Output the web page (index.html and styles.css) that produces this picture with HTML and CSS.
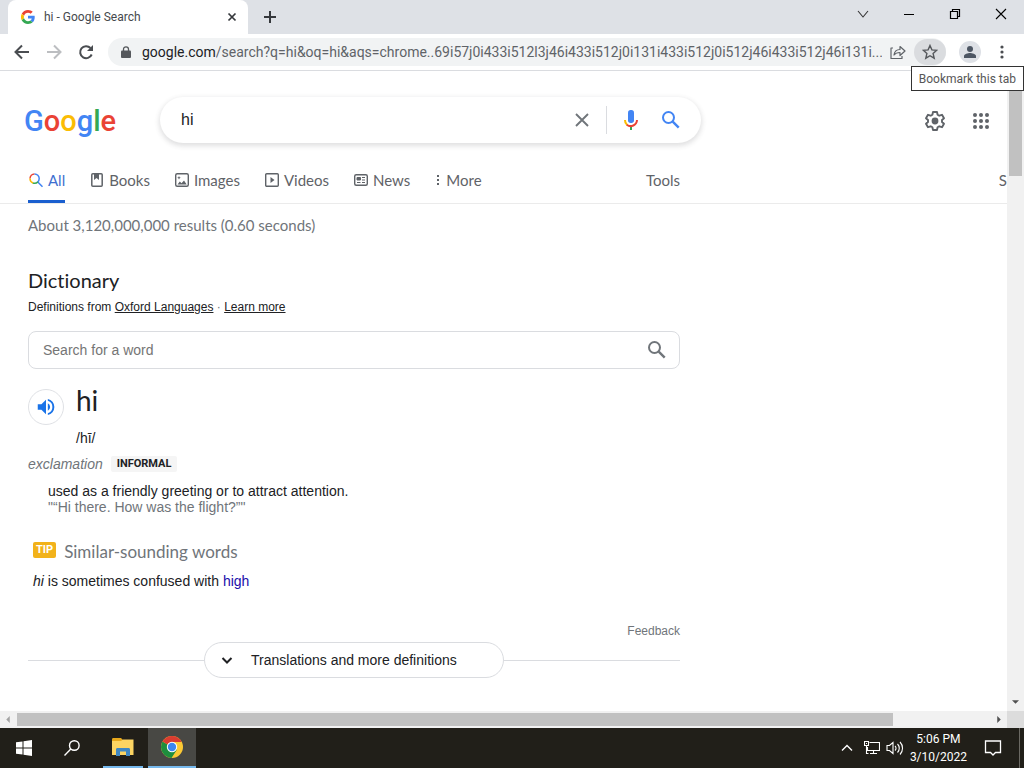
FILE: index.html
```
<!DOCTYPE html>
<html lang="en">
<head>
<meta charset="utf-8">
<meta name="viewport" content="width=device-width, initial-scale=1">
<title>hi - Google Search</title>
<link rel="stylesheet" href="styles.css">
</head>
<body>
<div class="desktop">
  <header class="browser">
    <div class="tabstrip">
      <div class="tab">
        <svg class="favicon" viewBox="0 0 48 48" width="14" height="14" aria-hidden="true"><path fill="#ea4335" d="M24 9.5c3.5 0 6.700 1.200 9.200 3.600l6.900-6.900C35.900 2.400 30.500 0 24 0 14.600 0 6.500 5.400 2.600 13.200l8 6.200C12.400 13.700 17.700 9.500 24 9.500z"/><path fill="#4285f4" d="M47 24.500c0-1.600-.2-3.100-.4-4.500H24v9h12.900c-.6 3-2.200 5.500-4.700 7.200l7.700 6C44.400 38 47 31.800 47 24.500z"/><path fill="#fbbc05" d="M10.500 28.600a14.500 14.500 0 0 1 0-9.200l-8-6.200a24 24 0 0 0 0 21.600z"/><path fill="#34a853" d="M24 48c6.500 0 11.900-2.100 15.900-5.800l-7.700-6c-2.200 1.500-4.900 2.300-8.200 2.300-6.300 0-11.600-4.200-13.500-9.900l-8 6.200C6.500 42.600 14.600 48 24 48z"/></svg>
        <span class="tab-title">hi - Google Search</span>
        <button class="tab-close" aria-label="Close tab"><svg viewBox="0 0 10 10" width="10" height="10"><path d="M1.500 1.500l7 7M8.500 1.500l-7 7" stroke="#35383c" stroke-width="1.700"/></svg></button>
      </div>
      <button class="new-tab" aria-label="New tab"><svg viewBox="0 0 12 12" width="12" height="12"><path d="M6 0v12M0 6h12" stroke="#35383c" stroke-width="2"/></svg></button>
      <div class="window-controls">
        <button aria-label="Search tabs"><svg viewBox="0 0 12 12" width="12" height="12"><path d="M1 3l5 6 5-6" fill="none" stroke="#333" stroke-width="1.100"/></svg></button>
        <button aria-label="Minimize"><svg viewBox="0 0 12 12" width="12" height="12"><path d="M1 6.500h10" stroke="#000"/></svg></button>
        <button aria-label="Restore"><svg viewBox="0 0 12 12" width="12" height="12"><path d="M1.500 3.500h7v7h-7zM3.500 3.500v-2h7v7h-2" fill="none" stroke="#000" stroke-width="1.200"/></svg></button>
        <button aria-label="Close"><svg viewBox="0 0 12 12" width="12" height="12"><path d="M1 1l10 10M11 1L1 11" stroke="#000" stroke-width="1.100"/></svg></button>
      </div>
    </div>
    <div class="toolbar">
      <button class="tool" aria-label="Back"><svg viewBox="0 0 16 16" width="16" height="16"><path d="M15 8H2M8 1.500L1.500 8 8 14.500" fill="none" stroke="#4a4d51" stroke-width="2"/></svg></button>
      <button class="tool" aria-label="Forward"><svg viewBox="0 0 16 16" width="16" height="16"><path d="M1 8h13M8 1.500L14.500 8 8 14.500" fill="none" stroke="#bcbec1" stroke-width="2"/></svg></button>
      <button class="tool" aria-label="Reload"><svg viewBox="0 0 16 16" width="16" height="16"><path d="M13.700 10.500A6 6 0 1 1 12.500 4" fill="none" stroke="#4a4d51" stroke-width="2"/><path d="M15 1v6H9z" fill="#4a4d51"/></svg></button>
      <div class="omnibox">
        <svg class="lock" viewBox="0 0 10 12" width="10" height="12" aria-hidden="true"><rect x="0" y="4.500" width="10" height="7.500" rx="1" fill="#55585c"/><path d="M2.500 5V3.300a2.500 2.500 0 0 1 5 0V5" fill="none" stroke="#55585c" stroke-width="1.300"/></svg>
        <label class="host" for="url">google.com</label>
        <input class="url" id="url" type="text" value="/search?q=hi&amp;oq=hi&amp;aqs=chrome..69i57j0i433i512l3j46i433i512j0i131i433i512j0i512j46i433i512j46i131i...">
        <button class="share" aria-label="Share this page"><svg viewBox="0 0 16 16" width="16" height="16"><path d="M3 4H1v10.500h11V12M4 11c.5-4 3-5.500 6-5.500V2.500l5 4.500-5 4.500V8.500C7.500 8.500 5.500 9 4 11z" fill="none" stroke="#5f6368" stroke-width="1.200" stroke-linejoin="round"/></svg></button>
        <div class="bookmark-wrap">
          <button class="bookmark" aria-label="Bookmark" aria-describedby="tip"><svg viewBox="0 0 16 16" width="16" height="16"><path d="M8 1.500l1.900 4.400 4.800.4-3.600 3.200 1.100 4.700L8 11.700l-4.200 2.500 1.100-4.700L1.300 6.300l4.800-.4z" fill="none" stroke="#55585c" stroke-width="1.400"/></svg></button>
          <div class="tooltip" id="tip" role="tooltip">Bookmark this tab</div>
        </div>
      </div>
      <button class="profile" aria-label="Profile"><svg viewBox="0 0 14 14" width="14" height="14"><circle cx="7" cy="4" r="3" fill="#4d5663"/><path d="M1 13v-2c0-2 4-3 6-3s6 1 6 3v2z" fill="#4d5663"/></svg></button>
      <button class="menu" aria-label="Chrome menu"><svg viewBox="0 0 4 14" width="4" height="14" fill="#4a4d51"><circle cx="2" cy="2" r="1.600"/><circle cx="2" cy="7" r="1.600"/><circle cx="2" cy="12" r="1.600"/></svg></button>
    </div>
  </header>

  <div class="viewport">
    <div class="page">
      <div class="search-header">
        <a class="logo" href="#" aria-label="Google"><span class="blue">G</span><span class="red">o</span><span class="yellow">o</span><span class="blue">g</span><span class="green">l</span><span class="red">e</span></a>
        <form class="search-box">
          <input class="query" type="text" value="hi" aria-label="Search">
          <button type="button" class="clear" aria-label="Clear"><svg viewBox="0 0 14 14" width="14" height="14"><path d="M1 1l12 12M13 1L1 13" stroke="#70757a" stroke-width="1.900"/></svg></button>
          <button type="button" class="mic" aria-label="Search by voice"><svg viewBox="0 0 24 24" width="24" height="24"><rect x="9" y="2" width="6" height="13" rx="2.700" fill="#4285f4"/><path d="M11 18h2v4h-2z" fill="#34a853"/><path d="M6 12a6 6 0 0 0 2.200 5" fill="none" stroke="#fbbc05" stroke-width="2"/><path d="M7.800 16.700A6.300 6.300 0 0 0 18 12" fill="none" stroke="#ea4335" stroke-width="2"/></svg></button>
          <button type="button" class="go" aria-label="Google Search"><svg viewBox="0 0 24 24" width="24" height="24"><circle cx="9.500" cy="9.500" r="5.500" fill="none" stroke="#4285f4" stroke-width="2"/><path d="M13.700 13.700l6 6" stroke="#4285f4" stroke-width="2.400"/></svg></button>
        </form>
        <div class="header-actions">
          <button aria-label="Settings"><svg viewBox="0 0 24 24" width="24" height="24"><path d="M10 3h4l.6 2.700 1.700 1 2.700-.9 2 3.500L19 11v2l2 1.700-2 3.500-2.700-.9-1.700 1L14 21h-4l-.6-2.700-1.700-1-2.700.9-2-3.500L5 13v-2L3 9.300l2-3.500 2.700.9 1.700-1z" fill="none" stroke="#5f6368" stroke-width="1.900" stroke-linejoin="round"/><circle cx="12" cy="12" r="3.400" fill="#5f6368"/></svg></button>
          <button aria-label="Google apps"><svg viewBox="0 0 24 24" width="24" height="24" fill="#5f6368"><circle cx="6" cy="6" r="2"/><circle cx="12" cy="6" r="2"/><circle cx="18" cy="6" r="2"/><circle cx="6" cy="12" r="2"/><circle cx="12" cy="12" r="2"/><circle cx="18" cy="12" r="2"/><circle cx="6" cy="18" r="2"/><circle cx="12" cy="18" r="2"/><circle cx="18" cy="18" r="2"/></svg></button>
        </div>
      </div>

      <nav class="filters">
        <div class="filter-list">
          <a class="active" href="#"><svg viewBox="0 0 16 16" width="16" height="16" fill="none" stroke-width="1.500"><path d="M2 6.500A4.700 4.700 0 0 1 6.500 2" stroke="#ea4335"/><path d="M6.500 2a4.600 4.600 0 0 1 4.700 4.600A4.600 4.600 0 0 1 9.800 10l4.700 4.700" stroke="#4285f4"/><path d="M9.900 9.900a4.700 4.700 0 0 1-5.200 1" stroke="#34a853"/><path d="M5 11a4.700 4.700 0 0 1-3-4.500" stroke="#fbbc05"/></svg>All</a>
          <a href="#"><svg viewBox="0 0 16 16" width="16" height="16"><rect x="2.800" y="1.800" width="10.400" height="12.400" rx="1" fill="none" stroke="#5f6368" stroke-width="1.500"/><path d="M5 2h5v6L7.500 6 5 8z" fill="#5f6368"/></svg>Books</a>
          <a href="#"><svg viewBox="0 0 16 16" width="16" height="16"><rect x="1.700" y="1.700" width="12.600" height="12.600" rx="1.500" fill="none" stroke="#5f6368" stroke-width="1.400"/><path d="M3.500 12.500l2.300-3 1.700 1.700L10 8.500l2.700 4zM5 4l.6 1.200 1.200.5-1.200.5L5 7.500l-.6-1.300-1.200-.5 1.200-.5z" fill="#5f6368"/></svg>Images</a>
          <a href="#"><svg viewBox="0 0 16 16" width="16" height="16"><rect x="1.700" y="1.700" width="12.600" height="12.600" rx="1" fill="none" stroke="#5f6368" stroke-width="1.400"/><path d="M6.500 5v6l4-3z" fill="#5f6368"/></svg>Videos</a>
          <a href="#"><svg viewBox="0 0 16 16" width="16" height="16"><rect x="1.700" y="2.700" width="12.600" height="10.600" rx="1.500" fill="none" stroke="#5f6368" stroke-width="1.400"/><path d="M4 5.500h3.500V8H4zM9 5.500h3M9 8h3M4 10.500h3.500M9 10.500h3" fill="#5f6368" stroke="#5f6368"/></svg>News</a>
          <button class="more"><svg viewBox="0 0 8 12" width="8" height="12" fill="#5f6368"><rect x="3" y="1" width="2" height="2"/><rect x="3" y="5" width="2" height="2"/><rect x="3" y="9" width="2" height="2"/></svg>More</button>
        </div>
        <button class="tools">Tools</button>
        <a class="safe" href="#">S</a>
      </nav>

      <main class="results">
        <p class="stats">About 3,120,000,000 results (0.60 seconds)</p>
        <h2 class="heading">Dictionary</h2>
        <p class="source">Definitions from <a href="#">Oxford Languages</a> <span class="dot">·</span> <a href="#">Learn more</a></p>
        <form class="word-search">
          <input type="text" placeholder="Search for a word" aria-label="Search for a word">
          <button type="button" aria-label="Look up"><svg viewBox="0 0 24 24" width="24" height="24"><circle cx="9.500" cy="9.500" r="5.500" fill="none" stroke="#70757a" stroke-width="2"/><path d="M13.700 13.700l6 6" stroke="#70757a" stroke-width="2.400"/></svg></button>
        </form>
        <div class="entry">
          <button class="listen" aria-label="Listen"><svg viewBox="0 0 24 24" width="22" height="22" fill="#1a73e8"><path d="M3 9v6h4l5 5V4L7 9zM16.500 12A4.500 4.500 0 0 0 14 8v8a4.500 4.500 0 0 0 2.500-4zM14 3.200v2.100a7 7 0 0 1 0 13.400v2.100a9 9 0 0 0 0-17.600z"/></svg></button>
          <div>
            <h3 class="word">hi</h3>
            <p class="phonetic">/hī/</p>
          </div>
        </div>
        <p class="grammar"><em>exclamation</em><span class="register">INFORMAL</span></p>
        <div class="sense">
          <p>used as a friendly greeting or to attract attention.</p>
          <p class="example">"“Hi there. How was the flight?”"</p>
        </div>
        <section class="tip">
          <div class="tip-head"><span class="badge">TIP</span><h4>Similar-sounding words</h4></div>
          <p><em>hi</em> is sometimes confused with <a href="#">high</a></p>
        </section>
        <a class="feedback" href="#">Feedback</a>
        <div class="expand">
          <button><svg viewBox="0 0 12 12" width="12" height="12"><path d="M1.500 4L6 8.500 10.500 4" fill="none" stroke="#202124" stroke-width="2"/></svg><span>Translations and more definitions</span></button>
        </div>
      </main>
    </div>
    <div class="scroll-y"><span class="thumb-y"></span><svg viewBox="0 0 8 4" width="7" height="4"><path d="M0 0h8L4 4z" fill="#505050"/></svg></div>
    <div class="scroll-x"><svg viewBox="0 0 4 8" width="4" height="7"><path d="M4 0v8L0 4z" fill="#a3a3a3"/></svg><span class="track-x"><span class="thumb-x"></span></span><svg viewBox="0 0 4 8" width="4" height="7"><path d="M0 0v8l4-4z" fill="#505050"/></svg></div>
    <div class="corner"></div>
  </div>

  <footer class="taskbar">
    <button class="task" aria-label="Start"><svg viewBox="0 0 16 16" width="16" height="16" fill="#fff"><path d="M0 2.300L6.500 1.400v6.100H0zM7.500 1.200L16 0v7.500H7.500zM0 8.500h6.500v6.100L0 13.700zM7.500 8.500H16V16l-8.500-1.200z"/></svg></button>
    <button class="task" aria-label="Search"><svg viewBox="0 0 16 16" width="16" height="16" fill="none" stroke="#fff" stroke-width="1.400"><circle cx="10.300" cy="5.500" r="4.800"/><path d="M6.800 9L.5 15.500"/></svg></button>
    <button class="task running" aria-label="File Explorer"><svg viewBox="0 0 22 18" width="22" height="18"><path d="M0 1.500C0 .7.500 0 1.300 0H9l2 2v14H0z" fill="#e8a91c"/><path d="M0 3h9l2-1.500h10.500V17H0z" fill="#fcd462"/><path d="M4 18v-6.500c0-.8.500-1.500 1.500-1.500h11c1 0 1.500.7 1.500 1.500V18h-4v-4.500H8V18z" fill="#3f87c2"/></svg></button>
    <button class="task current" aria-label="Google Chrome"><svg viewBox="0 0 24 24" width="24" height="24"><circle cx="12" cy="12" r="11" fill="#fcc934"/><path d="M12 12L2.500 6.500A11 11 0 0 0 11.500 23L17 14.500z" fill="#1e8e3e"/><path d="M12 12L2.500 6.500a11 11 0 0 1 19 0z" fill="#d93c31"/><path d="M12 7h9.800L17 14.500z" fill="#fcc934"/><circle cx="12" cy="12" r="5.200" fill="#fff"/><circle cx="12" cy="12" r="4.200" fill="#3c86f0"/></svg></button>
    <div class="tray">
      <button class="hidden-icons" aria-label="Show hidden icons"><svg viewBox="0 0 12 12" width="12" height="12"><path d="M1 8.500l5-5 5 5" fill="none" stroke="#fff" stroke-width="1.400"/></svg></button>
      <button aria-label="Network"><svg viewBox="0 0 16 16" width="16" height="16" fill="none" stroke="#fff" stroke-width="1.100"><path d="M5.500 2.500h10v8h-12V7M9.500 10.500v3M6 13.500h7M.5 1.500h4v4h-4zM2.500 5.500v8h2M2 3.500h1"/></svg></button>
      <button aria-label="Volume"><svg viewBox="0 0 18 16" width="18" height="16" fill="none" stroke="#fff" stroke-width="1.100"><path d="M1 5.500h2.500L7 2.500v11l-3.500-3H1zM9 6a3 3 0 0 1 0 4.500M11.500 4a6 6 0 0 1 0 8.500M14 2a9 9 0 0 1 0 12.500"/></svg></button>
      <div class="clock"><time>5:06 PM</time><time datetime="2022-03-10">3/10/2022</time></div>
      <button class="notify" aria-label="Notifications"><svg viewBox="0 0 18 18" width="18" height="18"><path d="M1.500 2h15v11.500h-5L9 16l-2.500-2.500h-5z" fill="none" stroke="#fff" stroke-width="1.300"/></svg></button>
      <button class="peek" aria-label="Show desktop"></button>
    </div>
  </footer>
</div>
</body>
</html>
```
FILE: styles.css
```
* { box-sizing: border-box; }
body { margin: 0; background: #fff; color: #202124; font: 14px/16px "Liberation Sans", Arial, sans-serif; }
p, h2, h3, h4 { margin: 0; font-weight: 400; }
a { color: inherit; text-decoration: none; }
button { display: flex; align-items: center; justify-content: center; padding: 0; border: 0; background: none; color: inherit; font: inherit; }
input { min-width: 0; padding: 0; border: 0; outline: 0; background: none; color: inherit; font: inherit; }
svg { flex: none; }

.desktop { display: flex; flex-direction: column; min-height: 100vh; }

/* browser chrome */
.browser { border-bottom: 1px solid #dadce0; font: 12px/16px Roboto, sans-serif; }
.tabstrip { display: flex; height: 34px; padding-left: 8px; background: #dee1e6; }
.tab { display: flex; align-items: center; width: 240px; padding: 0 8px 0 13px; border-radius: 8px 8px 0 0; background: #fff; }
.tab-title { flex: 1; margin-left: 9px; color: #45494d; }
.tab-close { width: 16px; height: 16px; }
.new-tab { width: 28px; margin-left: 8px; }
.window-controls { display: flex; height: 28px; margin-left: auto; }
.window-controls button { width: 46px; }
.toolbar { display: flex; align-items: center; height: 36px; padding-right: 12px; }
.tool { width: 32px; height: 32px; }
.tool:first-child { margin-left: 6px; }
.omnibox { display: flex; flex: 1; align-items: center; min-width: 0; height: 28px; margin-left: 6px; padding-left: 13px; border-radius: 14px; background: #f1f3f4; font-size: 14px; }
.host { margin-left: 11px; color: #202124; }
.url { flex: 1; color: #5f6368; }
.share { width: 32px; height: 28px; }
.bookmark-wrap { position: relative; }
.bookmark { width: 32px; height: 26px; border-radius: 13px; background: #dadcdf; }
.tooltip { position: absolute; z-index: 2; top: 27px; right: -78px; padding: 4px 7px 3px; border: 1px solid #333; background: #fff; color: #575757; font-size: 12px; line-height: 16px; white-space: nowrap; }
.profile { width: 22px; height: 22px; margin-left: 13px; border-radius: 50%; background: #dee1e6; }
.menu { width: 20px; height: 28px; margin-left: 11px; }

/* page area with scrollbars */
.viewport { display: grid; flex: 1; grid-template-columns: minmax(0, 1fr) 17px; grid-template-rows: 1fr 17px; }
.page { overflow: hidden; }
.scroll-y { display: flex; flex-direction: column; align-items: center; justify-content: space-between; padding: 17px 0 7px; background: #f1f1f1; }
.thumb-y { width: 13px; height: 88px; background: #c1c1c1; }
.scroll-x { display: flex; align-items: center; padding: 0 6px; background: #f1f1f1; }
.track-x { flex: 1; margin: 0 7px; }
.thumb-x { display: block; width: 90%; height: 13px; background: #c1c1c1; }
.corner { background: #dcdcdc; }

/* search header */
.search-header { display: flex; align-items: center; padding: 26px 14px 0 24px; }
.logo { width: 136px; padding-top: 2px; font: 500 29px/40px Roboto, sans-serif; }
.blue { color: #4285f4; }
.red { color: #ea4335; }
.yellow { color: #fbbc05; }
.green { color: #34a853; }
.search-box { display: flex; flex: 0 1 541px; align-items: center; height: 46px; padding: 0 10px 0 21px; border-radius: 23px; box-shadow: 0 2px 5px 1px rgba(64, 60, 67, .16); }
.query { flex: 1; font-size: 16px; line-height: 24px; }
.clear { width: 50px; height: 28px; border-right: 1px solid #dadce0; }
.mic { width: 40px; height: 40px; margin-left: 4px; }
.go { width: 40px; height: 40px; }
.header-actions { display: flex; gap: 22px; margin-left: auto; padding-top: 2px; }

/* filter tabs */
.filters { display: flex; margin-top: 16px; padding-left: 28px; border-bottom: 1px solid #ebebeb; color: #5f6368; font: 15px/20px Lato, sans-serif; }
.filter-list { display: flex; flex: 0 1 618px; gap: 24px; }
.filters a, .filters button { display: flex; align-items: center; gap: 4px; height: 44px; border-bottom: 3px solid transparent; }
.filters .active { border-color: #1a5fcf; color: #3e6fd0; }
.filters .safe { margin-left: auto; }

/* dictionary */
.results { display: flex; flex-direction: column; max-width: 680px; padding-left: 28px; }
.stats { margin-top: 11px; color: #70757a; font: 15px/20px Lato, sans-serif; }
.heading { margin-top: 31px; font: 20px/28px Lato, sans-serif; font-variant-ligatures: none; }
.source { margin-top: 5px; font-size: 12px; }
.source a { text-decoration: underline; }
.dot { color: #70757a; }
.word-search { display: flex; align-items: center; height: 38px; margin-top: 16px; padding: 0 10px 0 14px; border: 1px solid #dadce0; border-radius: 8px; }
.word-search input { flex: 1; }
.word-search input::placeholder { color: #757575; opacity: 1; }
.entry { display: flex; gap: 12px; margin-top: 16px; }
.listen { width: 36px; height: 36px; margin-top: 4px; border: 1px solid #dfe1e5; border-radius: 50%; }
.word { font: 28px/30px Lato, sans-serif; }
.phonetic { margin-top: 15px; }
.grammar { display: flex; align-items: center; gap: 8px; margin-top: 10px; color: #70757a; }
.register { padding: 0 6px; border-radius: 2px; background: #f5f5f5; color: #202124; font: 700 11px/16px Roboto, sans-serif; }
.sense { margin-top: 11px; padding-left: 20px; }
.example { color: #70757a; }
.tip { margin-top: 25px; padding-left: 5px; }
.tip-head { display: flex; align-items: flex-start; gap: 8px; }
.tip-head h4 { color: #70757a; font: 17px/24px Lato, sans-serif; }
.badge { margin-top: 2px; padding: 0 3px; border-radius: 2px; background: #f2b21a; color: #fff; font: 700 11px/16px Roboto, sans-serif; }
.tip p { margin-top: 9px; }
.tip a { color: #1a0dab; }
.feedback { align-self: flex-end; margin-top: 34px; color: #70757a; font-size: 12px; }
.expand { display: flex; align-items: center; margin: 3px 0 16px; }
.expand::before, .expand::after { flex: 1; height: 1px; background: #dadce0; content: ""; }
.expand button { justify-content: flex-start; width: 300px; height: 36px; padding-left: 16px; border: 1px solid #dadce0; border-radius: 18px; gap: 18px; }

/* taskbar */
.taskbar { display: flex; height: 40px; background: #211f19; color: #fff; font: 12px/18px Roboto, sans-serif; }
.task { width: 48px; height: 40px; }
.running { width: 40px; margin: 0 5px 0 7px; border-bottom: 2px solid #76b9ed; }
.current { border-bottom: 2px solid #76b9ed; background: #484844; }
.tray { display: flex; align-items: center; gap: 6px; height: 40px; margin-left: auto; }
.hidden-icons { width: 22px; }
.clock { display: flex; flex-direction: column; align-items: center; }
.notify { width: 40px; }
.peek { width: 5px; height: 40px; border-left: 1px solid #6b6963; }
```
